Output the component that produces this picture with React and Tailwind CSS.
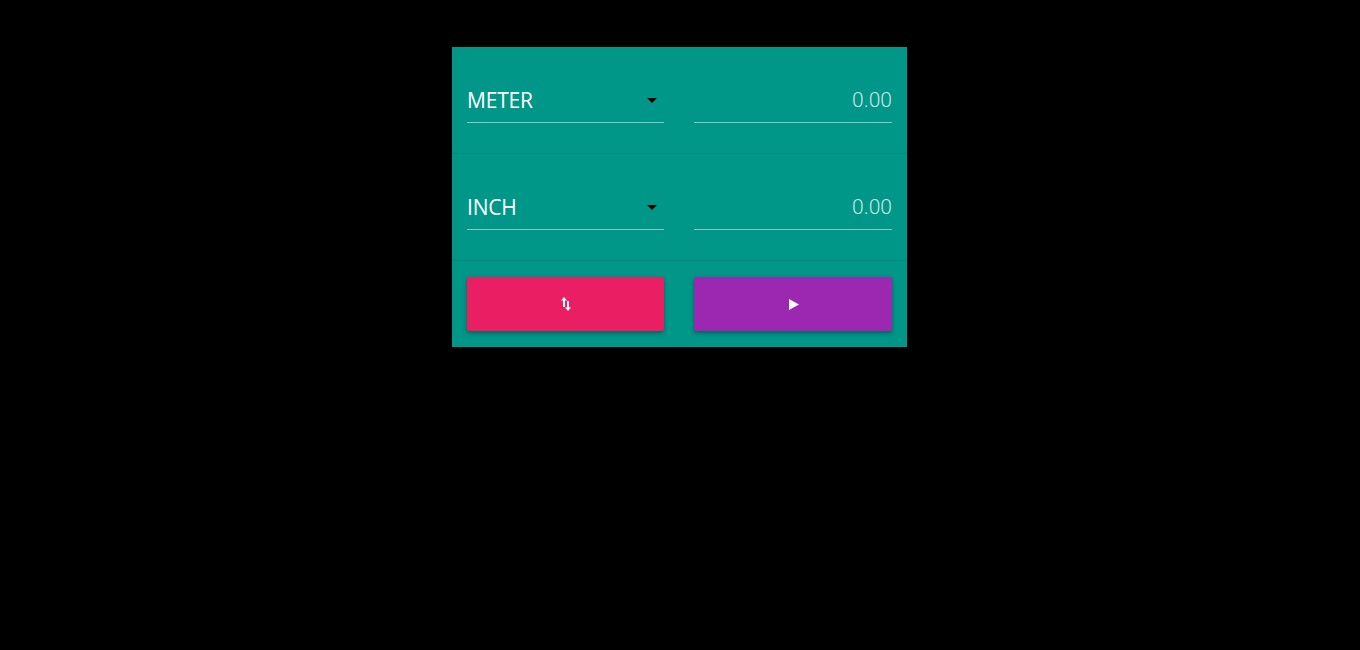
const Field = ({ unit }) => (
  <div className="flex gap-[30px] px-[15px] pt-[32px] h-[107px] border-b border-[#00897b]">
    <div className="w-[197px] h-[44px] flex items-center justify-between border-b border-[#80cbc4] pr-[7px]">
      <span className="text-white text-[21px] font-['Open_Sans',sans-serif] leading-none tracking-[-0.2px]">
        {unit}
      </span>
      <svg width="10" height="5" viewBox="0 0 10 5">
        <path d="M0 0L5 5L10 0Z" fill="#000" />
      </svg>
    </div>
    <div className="w-[198px] h-[44px] flex items-center justify-end border-b border-[#80cbc4]">
      <span className="text-[#c8e8e4] text-[21px] font-['Roboto',sans-serif] font-light leading-none">
        0.00
      </span>
    </div>
  </div>
);

export default function App() {
  return (
    <div className="min-h-[650px] bg-black pt-[47px]">
      <div className="w-[455px] ml-[452px] bg-[#009688]">
        <Field unit="METER" />
        <Field unit="INCH" />
        <div className="flex gap-[30px] px-[15px] pt-[16px] pb-[16px]">
          <button className="w-[197px] h-[54px] bg-[#e91e63] rounded-[2px] shadow-[0_2px_4px_rgba(0,0,0,0.35)] flex items-center justify-center">
            <svg width="10" height="14" viewBox="0 0 10 14" fill="#fff">
              <path d="M3 0L0 3.5h2V10h2V3.5h2Z" />
              <path d="M7 14L10 10.5H8V4H6v6.5H4Z" />
            </svg>
          </button>
          <button className="w-[198px] h-[54px] bg-[#9c27b0] rounded-[2px] shadow-[0_2px_4px_rgba(0,0,0,0.35)] flex items-center justify-center">
            <svg width="10" height="11" viewBox="0 0 10 11" className="ml-[1px]">
              <path d="M0 0L10 5.5L0 11Z" fill="#fff" />
            </svg>
          </button>
        </div>
      </div>
    </div>
  );
}
